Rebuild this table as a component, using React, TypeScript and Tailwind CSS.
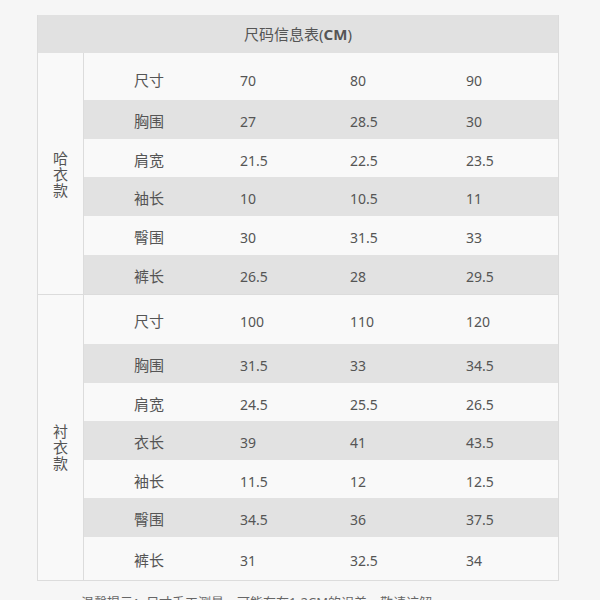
const FONT = { fontFamily: '"Noto Sans", "Noto Sans CJK SC", sans-serif' };

type Row = { label: string; values: string[]; h: string; pt: string };

const haYi: Row[] = [
  { label: '尺寸', values: ['70', '80', '90'], h: 'h-[47px]', pt: 'pt-[7px]' },
  { label: '胸围', values: ['27', '28.5', '30'], h: 'h-[39px]', pt: 'pt-[3px]' },
  { label: '肩宽', values: ['21.5', '22.5', '23.5'], h: 'h-[38px]', pt: 'pt-[4px]' },
  { label: '袖长', values: ['10', '10.5', '11'], h: 'h-[39px]', pt: 'pt-[3px]' },
  { label: '臀围', values: ['30', '31.5', '33'], h: 'h-[39px]', pt: 'pt-[3px]' },
  { label: '裤长', values: ['26.5', '28', '29.5'], h: 'h-[39px]', pt: 'pt-[3px]' },
];

const chenYi: Row[] = [
  { label: '尺寸', values: ['100', '110', '120'], h: 'h-[49px]', pt: 'pt-[3px]' },
  { label: '胸围', values: ['31.5', '33', '34.5'], h: 'h-[39px]', pt: 'pt-[3px]' },
  { label: '肩宽', values: ['24.5', '25.5', '26.5'], h: 'h-[38px]', pt: 'pt-[4px]' },
  { label: '衣长', values: ['39', '41', '43.5'], h: 'h-[39px]', pt: 'pt-[3px]' },
  { label: '袖长', values: ['11.5', '12', '12.5'], h: 'h-[38px]', pt: 'pt-[4px]' },
  { label: '臀围', values: ['34.5', '36', '37.5'], h: 'h-[39px]', pt: 'pt-[3px]' },
  { label: '裤长', values: ['31', '32.5', '34'], h: 'h-[43px]', pt: 'pt-[3px]' },
];

function SizeRow({ row, shaded }: { row: Row; shaded: boolean }) {
  return (
    <div
      className={`flex items-center ${row.h} ${row.pt} ${shaded ? 'bg-[#e2e2e2]' : 'bg-[#f9f9f9]'} text-[14px] text-[#555]`}
    >
      <div className="w-[50px] shrink-0" />
      <div className="w-[106px] shrink-0 text-[15px]">{row.label}</div>
      <div className="w-[110px] shrink-0">{row.values[0]}</div>
      <div className="w-[116px] shrink-0">{row.values[1]}</div>
      <div className="flex-1">{row.values[2]}</div>
    </div>
  );
}

function Group({ name, rows, labelPt }: { name: string; rows: Row[]; labelPt: string }) {
  return (
    <div className="flex">
      <div
        className={`w-[46px] shrink-0 flex flex-col items-center justify-center border-r border-[#dcdcdc] bg-[#f9f9f9] ${labelPt} text-[15px] leading-[16px] text-[#555]`}
      >
        {name.split('').map((c) => (
          <span key={c}>{c}</span>
        ))}
      </div>
      <div className="flex-1 flex flex-col">
        {rows.map((r, i) => (
          <SizeRow key={r.label} row={r} shaded={i % 2 === 1} />
        ))}
      </div>
    </div>
  );
}

export default function App() {
  return (
    <div className="w-[600px] h-[600px] overflow-hidden bg-[#f6f6f6] pt-[15px]" style={FONT}>
      <div className="ml-[37px] w-[522px] border border-t-0 border-[#dcdcdc]">
        {/* Header */}
        <div className="h-[38px] flex items-center justify-center bg-[#e1e1e1] text-[15px] text-[#555]">
          尺码信息表(<span className="font-bold">CM</span>)
        </div>
        <Group name="哈衣款" rows={haYi} labelPt="pt-0" />
        <div className="border-t border-[#dcdcdc]">
          <Group name="衬衣款" rows={chenYi} labelPt="pt-[18px]" />
        </div>
      </div>
      <p className="ml-[81px] mt-[12px] text-[13px] text-[#666]">
        温馨提示：尺寸手工测量，可能存在1-2CM的误差，敬请谅解
      </p>
    </div>
  );
}
